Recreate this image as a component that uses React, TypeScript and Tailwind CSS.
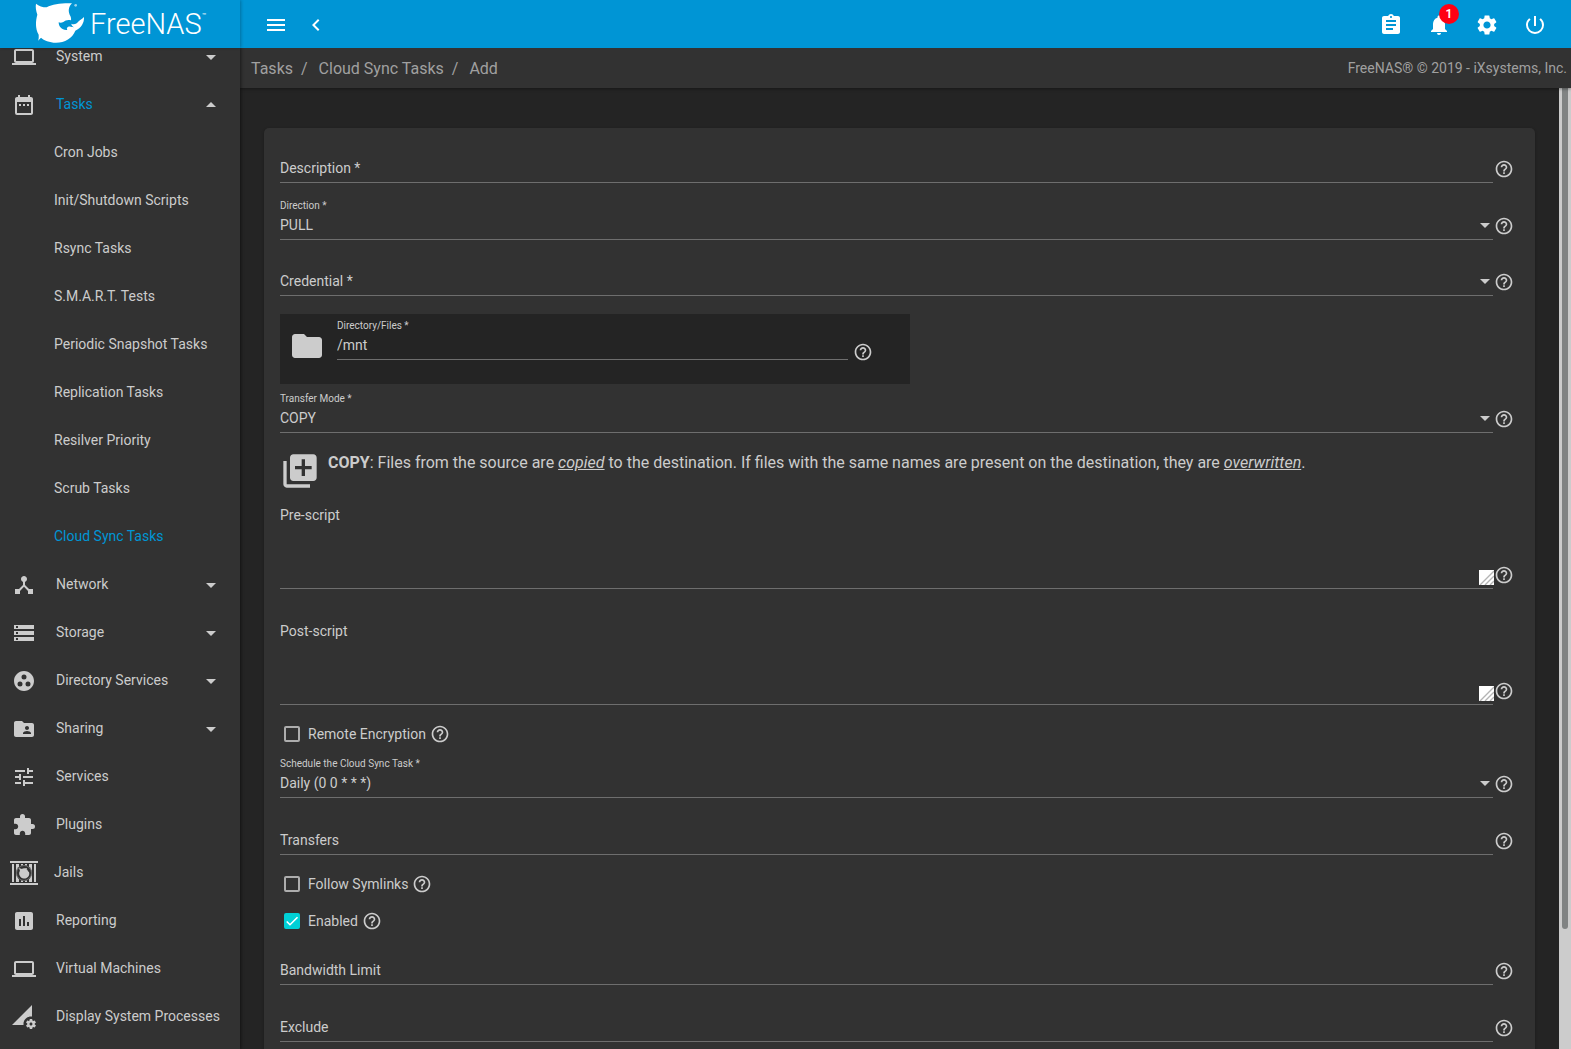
import React, { useState } from 'react';
import {
  MdArrowDropDown,
  MdArrowDropUp,
  MdAssessment,
  MdAssignment,
  MdChevronLeft,
  MdDateRange,
  MdDeviceHub,
  MdExtension,
  MdFolder,
  MdFolderShared,
  MdGroupWork,
  MdHelpOutline,
  MdLaptop,
  MdLibraryAdd,
  MdMenu,
  MdNotifications,
  MdPermDataSetting,
  MdPowerSettingsNew,
  MdSettings,
  MdStorage,
  MdTune,
} from 'react-icons/md';

const taskLinks = [
  'Cron Jobs',
  'Init/Shutdown Scripts',
  'Rsync Tasks',
  'S.M.A.R.T. Tests',
  'Periodic Snapshot Tasks',
  'Replication Tasks',
  'Resilver Priority',
  'Scrub Tasks',
  'Cloud Sync Tasks',
];

function Logo() {
  return (
    <a href="#" className="w-60 h-12 shrink-0 flex items-center pl-8 text-white shadow-[1px_0_3px_rgba(0,0,0,0.25)]">
      <svg width="58" height="48" viewBox="0 0 174 144" fill="currentColor" className="shrink-0">
        <path d="M12 11 C20 18 32 22 44 22 C62 12 90 9 120 10 C110 20 108 32 113 44 C117 50 118 56 117 61 C108 58 100 61 94 66 C88 69 83 68 80 67 C80 80 90 92 106 90 C102 84 108 78 116 80 L126 82 C120 78 118 74 118 71 C126 75 134 72 140 64 C145 59 151 56 156 51 C157 68 148 84 130 92 C122 114 98 128 72 128 C52 128 36 121 27 113 L18 122 C21 116 20 109 20 104 C9 84 11 62 16 44 C12 32 10 20 12 11 Z" />
        <circle cx="131" cy="16" r="4" opacity="0.6" />
      </svg>
      <span className="font-['Roboto'] font-light text-[29px] leading-12">FreeNAS</span>
      <span className="self-start pt-[10px] text-[7px] leading-3">™</span>
    </a>
  );
}

function JailIcon() {
  return (
    <svg width="28" height="24" viewBox="0 0 28 24" fill="currentColor">
      <path d="M0 0h28v2H0zM0 22h28v2H0zM2 3h2v18H2zM6 3h3v18H6zM11 3h2v18h-2zM15 3h2v18h-2zM19 3h3v18h-3zM24 3h2v18h-2z" />
      <circle cx="14" cy="12" r="8" fill="#323232" />
      <circle cx="14" cy="12" r="7.5" fill="none" stroke="currentColor" opacity="0.35" />
      <path d="M9 7l3 1 5-1-1 3 3 1a5 5 0 1 1-9-1z" />
      <circle cx="14" cy="12" r="4.5" />
    </svg>
  );
}

function NavItem({ icon, label, arrow, tight }: { icon: React.ReactNode; label: string; arrow?: 'up' | 'down'; tight?: boolean }) {
  return (
    <li>
      <a
        href="#"
        className={`h-12 flex items-center text-sm ${tight ? 'pl-[10px] gap-4' : 'pl-3 gap-5'} ${arrow === 'up' ? 'text-[#0095d5]' : ''}`}
      >
        <span className="pt-[2px] text-[#cccccc]">{icon}</span>
        <span className="flex-1">{label}</span>
        {arrow && (
          <span className="pt-[2px] pr-[17px] text-[#cccccc]">
            {arrow === 'up' ? <MdArrowDropUp size={24} /> : <MdArrowDropDown size={24} />}
          </span>
        )}
      </a>
    </li>
  );
}

function Sidebar() {
  return (
    <nav className="w-60 shrink-0 overflow-hidden bg-[#323232] shadow-[1px_0_3px_rgba(0,0,0,0.5)] z-10">
      {/* list is scrolled slightly, so the first row sits partly under the top bar */}
      <ul className="-mt-4">
        <NavItem icon={<MdLaptop size={24} />} label="System" arrow="down" />
        <NavItem icon={<MdDateRange size={24} />} label="Tasks" arrow="up" />
        {taskLinks.map((link) => (
          <li key={link}>
            <a
              href="#"
              className={`h-12 flex items-center pl-[54px] text-sm ${link === 'Cloud Sync Tasks' ? 'text-[#0095d5]' : ''}`}
            >
              {link}
            </a>
          </li>
        ))}
        <NavItem icon={<MdDeviceHub size={24} />} label="Network" arrow="down" />
        <NavItem icon={<MdStorage size={24} />} label="Storage" arrow="down" />
        <NavItem icon={<MdGroupWork size={24} />} label="Directory Services" arrow="down" />
        <NavItem icon={<MdFolderShared size={24} />} label="Sharing" arrow="down" />
        <NavItem icon={<MdTune size={24} />} label="Services" />
        <NavItem icon={<MdExtension size={24} />} label="Plugins" />
        <NavItem icon={<JailIcon />} label="Jails" tight />
        <NavItem icon={<MdAssessment size={24} />} label="Reporting" />
        <NavItem icon={<MdLaptop size={24} />} label="Virtual Machines" />
        <NavItem icon={<MdPermDataSetting size={24} />} label="Display System Processes" />
      </ul>
    </nav>
  );
}

function Help() {
  return (
    <button type="button" aria-label="Help" className="shrink-0 h-5">
      <MdHelpOutline size={20} />
    </button>
  );
}

interface FieldProps {
  id: string;
  label: string;
  value?: string;
  select?: boolean;
  className?: string;
  helpClass?: string;
}

function Field({ id, label, value, select, className = 'mt-4', helpClass = 'h-6 ml-px' }: FieldProps) {
  const control = 'block w-full h-[22px] pb-[6px] leading-4 text-sm bg-transparent appearance-none outline-none';
  return (
    <div className={`flex items-end pr-[5px] ${className}`}>
      <div className="relative flex-1 border-b border-[#6e6e6e]">
        <label
          htmlFor={id}
          className={value ? 'block h-[18px] text-[10px] leading-[14px]' : 'absolute left-0 bottom-[6px] text-sm leading-4'}
        >
          {label}
        </label>
        <div className={value ? '' : 'pt-[18px]'}>
          {select ? (
            <select id={id} className={control} defaultValue={value}>
              <option>{value}</option>
            </select>
          ) : (
            <input id={id} className={control} defaultValue={value} />
          )}
        </div>
        {select && <MdArrowDropDown size={24} className="absolute -right-1 bottom-[2px] pointer-events-none" />}
      </div>
      <div className={`flex ${helpClass}`}>
        <Help />
      </div>
    </div>
  );
}

function ScriptField({ id, label, className }: { id: string; label: string; className: string }) {
  return (
    <div className={`flex items-end pr-[5px] ${className}`}>
      <div className="relative flex-1 border-b border-[#6e6e6e]">
        <label htmlFor={id} className="block text-sm leading-4">
          {label}
        </label>
        <textarea id={id} className="block w-full h-[65px] bg-transparent resize-none outline-none text-sm" />
        {/* resize grip */}
        <svg width="15" height="15" viewBox="0 0 15 15" className="absolute -right-px bottom-[3px]">
          <rect width="15" height="15" fill="#fff" />
          <path d="M1 15L15 1M6 15L15 6M11 15L15 11" stroke="#b4b4b4" strokeWidth="1.4" />
        </svg>
      </div>
      <div className="h-6 flex ml-px">
        <Help />
      </div>
    </div>
  );
}

function CheckField({ id, label, checked, className }: { id: string; label: string; checked?: boolean; className: string }) {
  const [on, setOn] = useState(!!checked);
  return (
    <div className={`h-5 flex items-center pl-1 ${className}`}>
      <span className="relative w-4 h-4 mr-2">
        <input
          id={id}
          type="checkbox"
          checked={on}
          onChange={() => setOn(!on)}
          className="block w-4 h-4 appearance-none rounded-[2px] border-2 border-[#adadad] checked:border-[#00d0d6] checked:bg-[#00d0d6]"
        />
        {on && (
          <svg viewBox="0 0 24 24" className="absolute inset-0 w-4 h-4 pointer-events-none" fill="none" stroke="#fff" strokeWidth="2.4">
            <path d="M4.1 12.7L9 17.6 20.3 6.3" />
          </svg>
        )}
      </span>
      <label htmlFor={id} className="text-sm leading-4 mr-1">
        {label}
      </label>
      <Help />
    </div>
  );
}

export default function App() {
  return (
    <div className="h-screen flex flex-col overflow-hidden bg-[#242424] text-[#cccccc] font-['Roboto',sans-serif]">
      <header className="h-12 shrink-0 flex items-center bg-[#0095d5] text-white z-20">
        <Logo />
        <div className="flex-1 flex items-center justify-between pl-6 pr-6 pt-[2px]">
          <div className="flex gap-4">
            <button type="button" aria-label="Menu"><MdMenu size={24} /></button>
            <button type="button" aria-label="Back"><MdChevronLeft size={24} /></button>
          </div>
          <div className="flex gap-6">
            <button type="button" aria-label="Tasks"><MdAssignment size={24} /></button>
            <button type="button" aria-label="Notifications" className="relative">
              <MdNotifications size={24} />
              <span className="absolute -top-[9px] left-3 w-5 h-5 rounded-full bg-[#ff0013] text-xs leading-5 font-semibold text-center">1</span>
            </button>
            <button type="button" aria-label="Settings"><MdSettings size={24} /></button>
            <button type="button" aria-label="Power"><MdPowerSettingsNew size={24} /></button>
          </div>
        </div>
      </header>

      <div className="flex-1 flex min-h-0">
        <Sidebar />

        <div className="flex-1 flex flex-col min-w-0">
          <div className="h-10 shrink-0 flex items-center justify-between pl-[11px] pr-1 bg-[#323232] text-[#a0a0a0] shadow-[0_1px_3px_rgba(0,0,0,0.4)] z-[5]">
            <nav className="flex items-center pt-[2px]">
              <a href="#">Tasks</a>
              <span className="ml-2 mr-[11px]">/</span>
              <a href="#">Cloud Sync Tasks</a>
              <span className="ml-2 mr-[11px]">/</span>
              <span>Add</span>
            </nav>
            <span className="text-sm">FreeNAS® © 2019 - iXsystems, Inc.</span>
          </div>

          <div className="flex-1 flex min-h-0">
            <main className="flex-1 overflow-hidden px-6 pt-10">
              <form className="min-h-full px-4 pt-[14px] pb-40 rounded-[5px] bg-[#323232] shadow-[0_1px_3px_rgba(0,0,0,0.3)]">
                <Field id="description" label="Description *" className="" />
                <Field id="direction" label="Direction *" value="PULL" select />
                <Field id="credential" label="Credential *" select className="mt-[15px]" />

                <div className="mt-[18px] w-[630px] max-w-full h-[70px] flex items-start bg-[#242424] pl-[9px] pr-8 pt-[5px]">
                  <MdFolder size={36} className="mt-[9px] mr-3" />
                  <Field id="directory" label="Directory/Files *" value="/mnt" className="flex-1" helpClass="h-[18px] ml-[5px]" />
                </div>

                <Field id="mode" label="Transfer Mode *" value="COPY" select className="mt-2" />

                <div className="mt-[18px] flex items-start">
                  <MdLibraryAdd size={40} className="mr-2 shrink-0" />
                  <p className="leading-6">
                    <b>COPY</b>: Files from the source are <i className="underline">copied</i> to the destination. If files with the
                    same names are present on the destination, they are <i className="underline">overwritten</i>.
                  </p>
                </div>

                <ScriptField id="pre" label="Pre-script" className="mt-4" />
                <ScriptField id="post" label="Post-script" className="mt-[34px]" />

                <CheckField id="encryption" label="Remote Encryption" className="mt-[19px]" />
                <Field id="schedule" label="Schedule the Cloud Sync Task *" value="Daily (0 0 * * *)" select className="mt-[13px]" />
                <Field id="transfers" label="Transfers" />
                <CheckField id="symlinks" label="Follow Symlinks" className="mt-[19px]" />
                <CheckField id="enabled" label="Enabled" checked className="mt-[17px]" />
                <Field id="bandwidth" label="Bandwidth Limit" className="mt-[13px]" />
                <Field id="exclude" label="Exclude" />
              </form>
            </main>
            <div className="w-3 shrink-0 bg-[#cccccc]">
              <div className="h-[87.5%] w-[6px] mx-auto rounded-b-full bg-[#808383]" />
            </div>
          </div>
        </div>
      </div>
    </div>
  );
}
